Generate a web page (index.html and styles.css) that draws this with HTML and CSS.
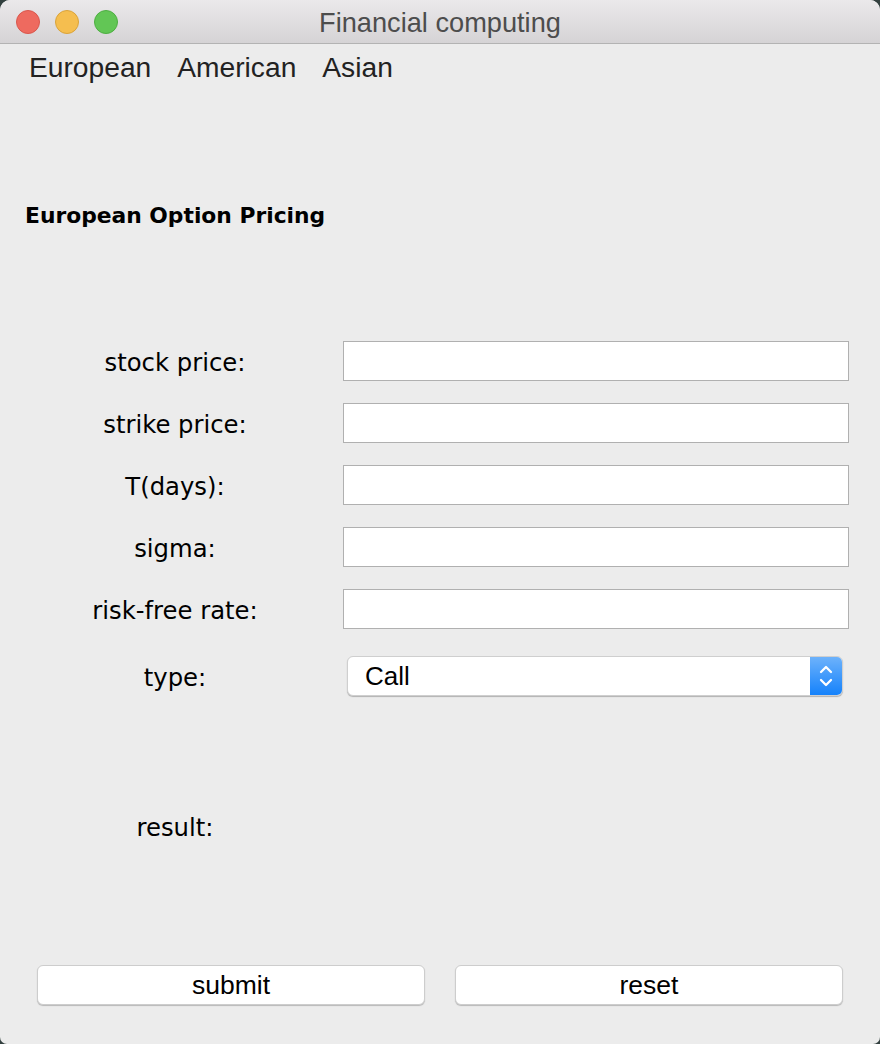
FILE: index.html
```html
<!DOCTYPE html>
<html>
<head>
<meta charset="utf-8">
<link rel="stylesheet" href="styles.css">
</head>
<body>
<div class="window">
  <div class="titlebar">
    <div class="lights">
      <span class="light red"></span>
      <span class="light yellow"></span>
      <span class="light green"></span>
    </div>
    <div class="title">Financial computing</div>
  </div>
  <div class="menubar">
    <span class="menu-item">European</span>
    <span class="menu-item">American</span>
    <span class="menu-item">Asian</span>
  </div>
  <h1 class="heading">European Option Pricing</h1>
  <div class="form">
    <label class="label">stock price:</label>
    <div class="field"><input class="input" type="text"></div>
    <label class="label">strike price:</label>
    <div class="field"><input class="input" type="text"></div>
    <label class="label">T(days):</label>
    <div class="field"><input class="input" type="text"></div>
    <label class="label">sigma:</label>
    <div class="field"><input class="input" type="text"></div>
    <label class="label">risk-free rate:</label>
    <div class="field"><input class="input" type="text"></div>
    <label class="label type-label">type:</label>
    <div class="field type-field">
      <div class="select">
        <span class="select-value">Call</span>
        <span class="select-arrows">
          <svg width="16" height="28" viewBox="0 0 16 28">
            <path d="M3 10 L8 5 L13 10" fill="none" stroke="#fff" stroke-width="2.3" stroke-linecap="round" stroke-linejoin="round"/>
            <path d="M3 18 L8 23 L13 18" fill="none" stroke="#fff" stroke-width="2.3" stroke-linecap="round" stroke-linejoin="round"/>
          </svg>
        </span>
      </div>
    </div>
  </div>
  <div class="result-row">
    <span class="label">result:</span>
  </div>
  <div class="buttons">
    <button class="btn">submit</button>
    <button class="btn">reset</button>
  </div>
</div>
</body>
</html>
```

FILE: styles.css
```css
html, body {
  margin: 0;
  padding: 0;
}
body {
  background: #33403f;
  width: 880px;
  height: 1044px;
  overflow: hidden;
}
.window {
  width: 880px;
  height: 1044px;
  background: #ececec;
  border-radius: 10px 10px 7px 7px;
  overflow: hidden;
  display: flex;
  flex-direction: column;
}
.titlebar {
  height: 43px;
  border-bottom: 1px solid #b3b3b3;
  background: linear-gradient(#ebe9eb, #d5d3d5);
  position: relative;
  display: flex;
  align-items: center;
  justify-content: center;
}
.lights {
  position: absolute;
  left: 16px;
  top: 10px;
  display: flex;
  gap: 15px;
}
.light {
  width: 24px;
  height: 24px;
  border-radius: 50%;
  box-sizing: border-box;
}
.red { background: #ee6a5f; border: 1px solid #d9574d; }
.yellow { background: #f5be4f; border: 1px solid #d9a33a; }
.green { background: #62c655; border: 1px solid #4eae42; }
.title {
  font-family: "Liberation Sans", Arial, sans-serif;
  font-size: 27.2px;
  color: #4d4d4d;
  padding-top: 2px;
}
.menubar {
  display: flex;
  gap: 26px;
  padding-left: 29px;
  height: 46px;
  align-items: center;
  font-family: "Liberation Sans", Arial, sans-serif;
  font-size: 28.2px;
  color: #222;
}
.heading {
  margin: 111px 0 0 25px;
  height: 30px;
  line-height: 30px;
  font-family: "DejaVu Sans", Verdana, sans-serif;
  font-weight: bold;
  font-size: 21.8px;
  color: #000;
}
.form {
  margin-top: 110px;
  display: grid;
  grid-template-columns: 300px 506px;
  column-gap: 18px;
  row-gap: 22px;
  padding-left: 25px;
}
.label {
  font-family: "DejaVu Sans", Verdana, sans-serif;
  font-size: 24.3px;
  color: #000;
  height: 40px;
  padding-top: 2px;
  box-sizing: border-box;
  display: flex;
  align-items: center;
  justify-content: center;
}
.field {
  height: 40px;
}
.input {
  box-sizing: border-box;
  width: 506px;
  height: 40px;
  margin: 0;
  border: 1px solid #b0b0b0;
  background: #fff;
  outline: none;
}
.type-label, .type-field {
  margin-top: 5px;
}
.select {
  margin-left: 4px;
  width: 496px;
  height: 40px;
  box-sizing: border-box;
  background: #fff;
  border-radius: 6px;
  border: 1px solid #cfcfcf;
  box-shadow: 0 1px 1px rgba(0,0,0,0.25);
  display: flex;
  align-items: center;
  overflow: hidden;
}
.select-value {
  flex: 1;
  padding-left: 17px;
  font-family: "Liberation Sans", Arial, sans-serif;
  font-size: 26px;
  color: #000;
}
.select-arrows {
  width: 32px;
  height: 100%;
  background: linear-gradient(#6db2fb, #1582fb);
  display: flex;
  align-items: center;
  justify-content: center;
}
.result-row {
  margin-top: 110px;
  padding-left: 25px;
  width: 300px;
}
.buttons {
  margin-top: 119px;
  padding-left: 37px;
  display: flex;
  gap: 30px;
}
.btn {
  width: 388px;
  height: 40px;
  box-sizing: border-box;
  background: #fff;
  border: 1px solid #cdcdcd;
  border-radius: 6px;
  box-shadow: 0 1px 1px rgba(0,0,0,0.22);
  font-family: "Liberation Sans", Arial, sans-serif;
  font-size: 26.5px;
  color: #000;
  padding: 0;
}
```
